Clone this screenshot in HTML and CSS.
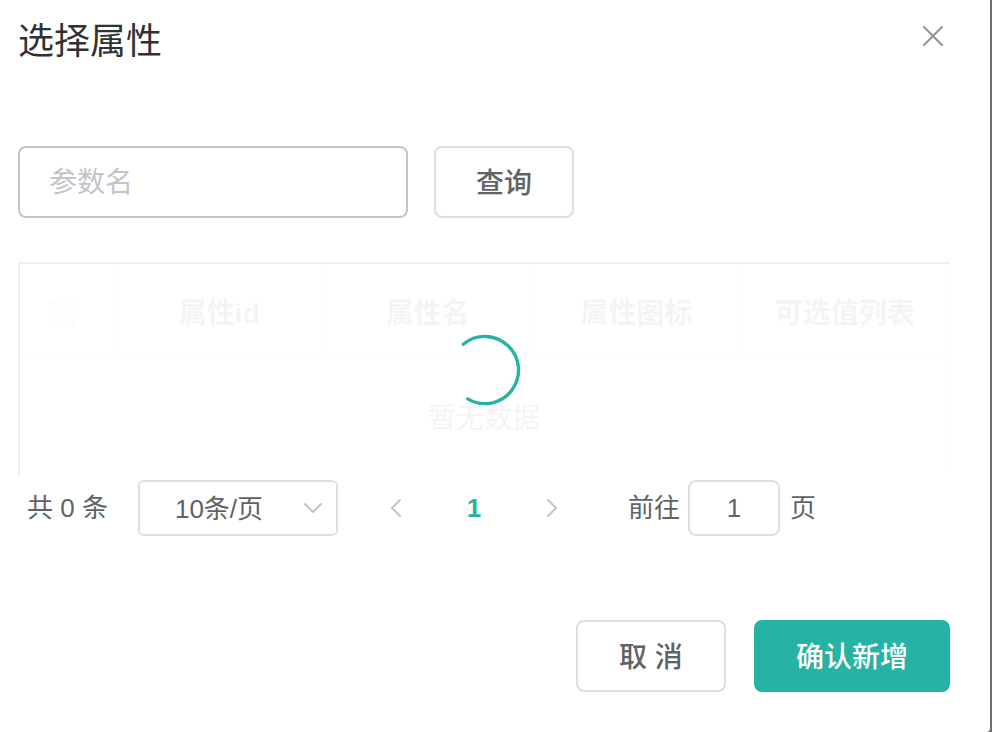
FILE: index.html
```
<!DOCTYPE html>
<html lang="zh-CN">
<head>
    <meta charset="UTF-8">
    <meta name="viewport" content="width=device-width, initial-scale=1.0">
    <title>选择属性</title>
    <link rel="stylesheet" href="styles.css">
</head>
<body>
    <div class="dialog" role="dialog" aria-labelledby="dialogTitle">
        <div class="dialog-header">
            <h1 class="dialog-title" id="dialogTitle">选择属性</h1>
            <button class="close-btn" type="button" aria-label="关闭">
                <svg viewBox="0 0 24 24" width="24" height="24">
                    <path d="M3 3L21 21M21 3L3 21"/>
                </svg>
            </button>
        </div>

        <div class="dialog-body">
            <form class="search-form">
                <input class="search-input" type="text" placeholder="参数名" aria-label="参数名">
                <button class="btn" type="button">查询</button>
            </form>

            <div class="table-box">
                <table class="attr-table">
                    <colgroup>
                        <col class="col-check">
                        <col>
                        <col>
                        <col>
                        <col>
                    </colgroup>
                    <thead>
                        <tr>
                            <th><input class="check" type="checkbox" aria-label="全选"></th>
                            <th>属性id</th>
                            <th>属性名</th>
                            <th>属性图标</th>
                            <th>可选值列表</th>
                        </tr>
                    </thead>
                    <tbody>
                        <tr>
                            <td class="empty" colspan="5">暂无数据</td>
                        </tr>
                    </tbody>
                </table>
                <!-- 加载遮罩 -->
                <div class="loading-mask">
                    <svg class="spinner" viewBox="25 25 50 50">
                        <path d="M37.1 34.7A20 20 0 1 1 39.7 67.2"/>
                    </svg>
                </div>
            </div>

            <div class="pagination">
                <span class="total">共 0 条</span>
                <div class="size-box">
                    <select class="size-select" aria-label="每页条数">
                        <option>10条/页</option>
                    </select>
                    <svg class="size-arrow" viewBox="0 0 18 12" width="18" height="12">
                        <path d="M1 2L9 10L17 2"/>
                    </svg>
                </div>
                <button class="page-btn" type="button" aria-label="上一页" disabled>
                    <svg viewBox="0 0 12 20" width="12" height="20">
                        <path d="M10 2L2 10L10 18"/>
                    </svg>
                </button>
                <button class="page-btn active" type="button">1</button>
                <button class="page-btn" type="button" aria-label="下一页" disabled>
                    <svg viewBox="0 0 12 20" width="12" height="20">
                        <path d="M2 2L10 10L2 18"/>
                    </svg>
                </button>
                <label class="jump-label" for="jump">前往</label>
                <input class="jump-input" id="jump" type="text" value="1">
                <span>页</span>
            </div>
        </div>

        <div class="dialog-footer">
            <button class="btn" type="button">取 消</button>
            <button class="btn btn-primary" type="button">确认新增</button>
        </div>
    </div>
</body>
</html>
```

FILE: styles.css
```
* {
    box-sizing: border-box;
}

body {
    margin: 0;
    background-color: #6e6e70;
    color: #606266;
    font-family: 'Liberation Sans', 'Noto Sans CJK SC', sans-serif;
    font-size: 28px;
}

button,
input,
select {
    font-family: inherit;
    color: inherit;
    margin: 0;
}

svg {
    fill: none;
    stroke: currentColor;
    stroke-linecap: round;
    stroke-linejoin: round;
}

.dialog {
    min-height: 100vh;
    margin-right: 2px;
    padding: 12px 40px 40px 18px;
    background-color: #fff;
    border-bottom-right-radius: 4px;
}

.dialog-header {
    display: flex;
    justify-content: space-between;
    align-items: flex-start;
}

.dialog-title {
    margin: 0;
    font-size: 36px;
    line-height: 60px;
    font-weight: 400;
    color: #303133;
}

.close-btn {
    display: flex;
    padding: 12px 5px;
    border: none;
    background: none;
    color: #909399;
    stroke-width: 2;
    cursor: pointer;
}

.dialog-body {
    padding-top: 74px;
}

.search-form {
    display: flex;
    gap: 26px;
}

.search-input {
    width: 390px;
    height: 72px;
    padding: 2px 29px 0;
    border: 2px solid #c0c4cc;
    border-radius: 8px;
    background-color: #fff;
    font-size: 28px;
    outline: none;
}

.search-input::placeholder {
    color: #c0c4cc;
    opacity: 1;
}

.btn {
    height: 72px;
    padding: 0 40px 2px;
    border: 2px solid #dcdfe6;
    border-radius: 8px;
    background-color: #fff;
    font-size: 28px;
    font-weight: 500;
    cursor: pointer;
}

.btn-primary {
    border-color: #26b3a4;
    background-color: #26b3a4;
    color: #fff;
}

/* 表格 */
.table-box {
    position: relative;
    margin-top: 44px;
    border-top: 2px solid #ebeef5;
    border-left: 2px solid #ebeef5;
}

.attr-table {
    width: 100%;
    table-layout: fixed;
    border-collapse: separate;
    border-spacing: 0;
}

.col-check {
    width: 96px;
}

.attr-table th,
.attr-table td {
    padding: 0;
    border-right: 2px solid #ebeef5;
    text-align: center;
}

.attr-table th {
    height: 92px;
    padding-top: 4px;
    border-bottom: 2px solid #ebeef5;
    color: #909399;
    font-weight: 700;
}

.attr-table .empty {
    height: 120px;
    color: #909399;
}

.check {
    display: block;
    width: 28px;
    height: 28px;
    margin: 6px auto 0 28px;
    border: 2px solid #dcdfe6;
    border-radius: 4px;
    background-color: #e4effc;
    appearance: none;
}

.loading-mask {
    position: absolute;
    inset: 0;
    display: flex;
    align-items: center;
    justify-content: center;
    background-color: rgba(255, 255, 255, 0.9);
}

.spinner {
    width: 84px;
    height: 84px;
    color: #26b3a4;
    stroke-width: 2;
}

/* 分页 */
.pagination {
    display: flex;
    align-items: center;
    padding: 4px 9px;
    font-size: 26px;
    line-height: 56px;
}

.total {
    margin-right: 30px;
}

.size-box {
    position: relative;
    margin-right: 28px;
}

.size-select {
    display: block;
    width: 200px;
    height: 56px;
    padding: 2px 35px 0;
    border: 2px solid #dcdfe6;
    border-radius: 6px;
    background-color: #fff;
    font-size: 26px;
    appearance: none;
}

.size-arrow {
    position: absolute;
    top: 22px;
    right: 16px;
    color: #c0c4cc;
    stroke-width: 2;
    pointer-events: none;
}

.page-btn {
    display: flex;
    align-items: center;
    justify-content: center;
    width: 60px;
    height: 56px;
    margin-right: 18px;
    padding: 0;
    border: none;
    background: none;
    font-size: 26px;
    font-weight: 700;
    color: #c0c4cc;
    stroke-width: 2;
}

.page-btn.active {
    color: #26b3a4;
}

.jump-label {
    margin-left: 28px;
}

.jump-input {
    width: 92px;
    height: 56px;
    margin: 0 10px 0 8px;
    padding: 0 6px;
    border: 2px solid #dcdfe6;
    border-radius: 8px;
    background-color: #fff;
    font-size: 26px;
    text-align: center;
}

.dialog-footer {
    display: flex;
    justify-content: flex-end;
    gap: 28px;
    padding-top: 80px;
}

.dialog-footer .btn {
    min-width: 150px;
}
```
